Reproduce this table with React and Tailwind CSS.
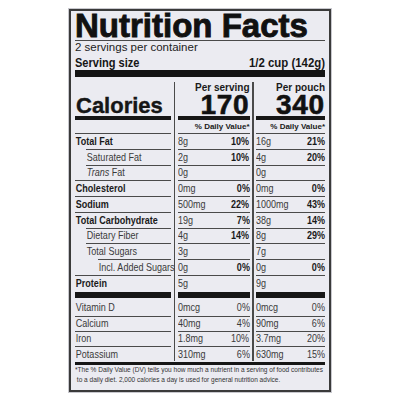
const rows = [
  { label: "Total Fat", bold: true, indent: 0, s: "8g", sp: "10%", p: "16g", pp: "21%" },
  { label: "Saturated Fat", indent: 1, s: "2g", sp: "10%", p: "4g", pp: "20%" },
  { label: "trans", indent: 1, s: "0g", sp: "", p: "0g", pp: "" },
  { label: "Cholesterol", bold: true, indent: 0, s: "0mg", sp: "0%", p: "0mg", pp: "0%" },
  { label: "Sodium", bold: true, indent: 0, s: "500mg", sp: "22%", p: "1000mg", pp: "43%" },
  { label: "Total Carbohydrate", bold: true, indent: 0, s: "19g", sp: "7%", p: "38g", pp: "14%" },
  { label: "Dietary Fiber", indent: 1, s: "4g", sp: "14%", p: "8g", pp: "29%" },
  { label: "Total Sugars", indent: 1, s: "3g", sp: "", p: "7g", pp: "" },
  { label: "Incl. Added Sugars", indent: 2, s: "0g", sp: "0%", p: "0g", pp: "0%" },
  { label: "Protein", bold: true, indent: 0, s: "5g", sp: "", p: "9g", pp: "" },
];

const vitamins = [
  ["Vitamin D", "0mcg", "0%", "0mcg", "0%"],
  ["Calcium", "40mg", "4%", "90mg", "6%"],
  ["Iron", "1.8mg", "10%", "3.7mg", "20%"],
  ["Potassium", "310mg", "6%", "630mg", "15%"],
];

const indents = ["ml-0", "ml-[11px]", "ml-[23px]"];

// condensed text: the label uses a narrow grotesque, so squeeze Liberation Sans
function N({ children, right, className = "" }) {
  return (
    <span
      className={
        "inline-block whitespace-nowrap scale-x-[0.82] " +
        (right ? "origin-right " : "origin-left ") +
        className
      }
    >
      {children}
    </span>
  );
}

function Row({ indent = 0, children }) {
  return (
    <div className="h-[15.75px] shrink-0 flex flex-col">
      <div className={"h-px bg-[#4a4a4a] " + indents[indent]} />
      <div className={"flex-1 flex items-center " + indents[indent]}>{children}</div>
    </div>
  );
}

function VitRow({ first, children }) {
  if (first) {
    return <div className="h-[17.5px] shrink-0 flex items-center pt-[2px] text-[#3a3a3a]">{children}</div>;
  }
  return (
    <div className="h-[15.3px] shrink-0 flex flex-col text-[#3a3a3a]">
      <div className="h-px bg-[#4a4a4a]" />
      <div className="flex-1 flex items-center">{children}</div>
    </div>
  );
}

function LeftCol() {
  return (
    <div className="w-[96px] flex flex-col">
      <div className="h-[39px] flex items-end">
        <div className="text-[22px] leading-[21px] font-bold text-[#161616] pl-px [-webkit-text-stroke:0.4px_#161616]">
          Calories
        </div>
      </div>
      <div className="h-[4px] bg-[#161616]" />
      <div className="h-[13px]" />
      {rows.map((r, i) => (
        <Row key={i} indent={r.indent}>
          <N
            className={
              "text-[11px] leading-none pl-px " +
              (r.bold ? "font-bold text-[#1a1a1a]" : "text-[#3a3a3a]") +
              (r.indent === 2 ? " scale-x-[0.78]" : "")
            }
          >
            {r.label === "trans" ? (
              <>
                <i>Trans</i> Fat
              </>
            ) : (
              r.label
            )}
          </N>
        </Row>
      ))}
      <div className="h-[6.5px] bg-[#161616] mt-[1px]" />
      {vitamins.map((v, i) => (
        <VitRow key={i} first={i === 0}>
          <N className="text-[11px] leading-none pl-px">{v[0]}</N>
        </VitRow>
      ))}
    </div>
  );
}

function ValueCol({ title, big, idx, className }) {
  return (
    <div className={"flex flex-col " + className}>
      <div className="h-[39px] flex flex-col items-end">
        <div className="pt-[5px] text-[10px] leading-[11px] font-bold text-[#1a1a1a]">{title}</div>
        <div className="text-[28px] leading-[23px] font-bold tracking-[0.8px] text-[#111] [-webkit-text-stroke:0.6px_#111]">
          {big}
        </div>
      </div>
      <div className="h-[4px] bg-[#161616]" />
      <div className="h-[13px] flex items-center justify-end">
        <span className="text-[8px] leading-none font-bold text-[#1a1a1a]">% Daily Value*</span>
      </div>
      {rows.map((r, i) => (
        <Row key={i}>
          <div className="w-full flex justify-between text-[11px] leading-none">
            <N className="text-[#3a3a3a]">{idx === 0 ? r.s : r.p}</N>
            <N right className="font-bold text-[#1a1a1a]">{idx === 0 ? r.sp : r.pp}</N>
          </div>
        </Row>
      ))}
      <div className="h-[6.5px] bg-[#161616] mt-[1px]" />
      {vitamins.map((v, i) => (
        <VitRow key={i} first={i === 0}>
          <div className="w-full flex justify-between text-[11px] leading-none">
            <N>{idx === 0 ? v[1] : v[3]}</N>
            <N right>{idx === 0 ? v[2] : v[4]}</N>
          </div>
        </VitRow>
      ))}
    </div>
  );
}

export default function App() {
  return (
    <div
      className="w-[400px] h-[400px] bg-white pl-[68px] pt-[8px]"
      style={{ fontFamily: '"Liberation Sans", Arial, sans-serif' }}
    >
      <div className="w-[264px] h-[385px] border border-[#c8c8ce]">
        <div className="h-full border-2 border-[#3a3a3a] bg-[#ebebf1] px-[4px] flex flex-col">
          <div className="h-[29px] shrink-0 text-[33px] leading-[30px] font-bold text-[#111] whitespace-nowrap [-webkit-text-stroke:0.9px_#111]">
            Nutrition Facts
          </div>
          <div className="h-px shrink-0 bg-[#4a4a4a]" />
          <div className="h-[13px] shrink-0 text-[11.5px] leading-[13px] text-[#222]">2 servings per container</div>
          <div className="mt-[1.5px] h-[14px] shrink-0 flex justify-between text-[12px] leading-[14px] font-bold text-[#161616]">
            <span className="inline-block scale-x-[0.92] origin-left">Serving size</span>
            <span className="inline-block scale-x-[0.95] origin-right">1/2 cup (142g)</span>
          </div>
          <div className="h-[7px] shrink-0 bg-[#141414] mt-[0.5px]" />
          <div className="flex shrink-0">
            <LeftCol />
            <div className="w-[1.5px] bg-[#4a4a4a] mt-[5px] mx-[2.5px]" />
            <ValueCol title="Per serving" big="170" idx={0} className="w-[72px]" />
            <div className="w-[1.5px] bg-[#4a4a4a] mt-[5px] ml-[2.5px] mr-[2px]" />
            <ValueCol title="Per pouch" big="340" idx={1} className="flex-1" />
          </div>
          <div className="h-[3px] shrink-0 bg-[#161616] mt-[1px]" />
          <div className="shrink-0 w-[288px] scale-x-[0.87] origin-left text-[7.5px] leading-[10px] text-[#333] whitespace-nowrap">
            <div>*The % Daily Value (DV) tells you how much a nutrient in a serving of food contributes</div>
            <div>&nbsp;to a daily diet. 2,000 calories a day is used for general nutrition advice.</div>
          </div>
        </div>
      </div>
    </div>
  );
}
